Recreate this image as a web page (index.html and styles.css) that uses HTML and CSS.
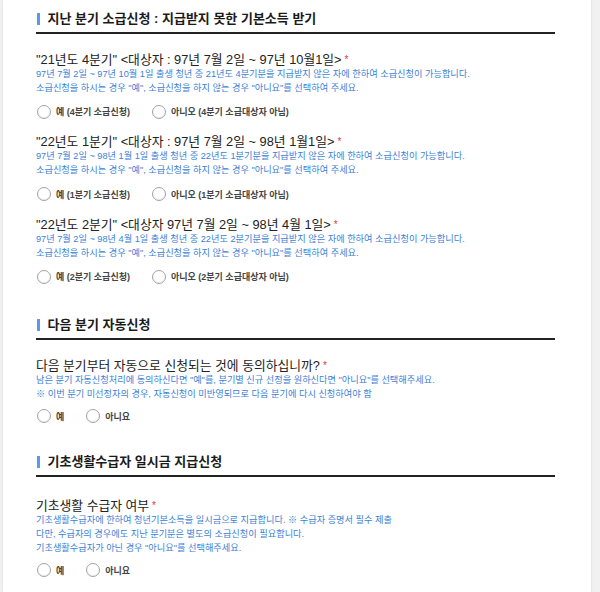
FILE: index.html
```html
<!DOCTYPE html>
<html lang="ko">
<head>
<meta charset="utf-8">
<title>소급신청</title>
<link rel="stylesheet" href="styles.css">
</head>
<body>
<div class="page">
  <section class="sec sec-first">
    <h2 class="sec-title">지난 분기 소급신청 : 지급받지 못한 기본소득 받기</h2>

    <div class="q q-first">
      <div class="q-title">"21년도 4분기" &lt;대상자 : 97년 7월 2일 ~ 97년 10월1일&gt;<span class="req">*</span></div>
      <div class="q-desc">97년 7월 2일 ~ 97년 10월 1일 출생 청년 중 21년도 4분기분을 지급받지 않은 자에 한하여 소급신청이 가능합니다.<br>소급신청을 하시는 경우 "예", 소급신청을 하지 않는 경우 "아니요"를 선택하여 주세요.</div>
      <div class="opts">
        <label class="opt"><span class="radio"></span>예 (4분기 소급신청)</label>
        <label class="opt"><span class="radio"></span>아니오 (4분기 소급대상자 아님)</label>
      </div>
    </div>

    <div class="q">
      <div class="q-title">"22년도 1분기" &lt;대상자 : 97년 7월 2일 ~ 98년 1월1일&gt;<span class="req">*</span></div>
      <div class="q-desc">97년 7월 2일 ~ 98년 1월 1일 출생 청년 중 22년도 1분기분을 지급받지 않은 자에 한하여 소급신청이 가능합니다.<br>소급신청을 하시는 경우 "예", 소급신청을 하지 않는 경우 "아니요"를 선택하여 주세요.</div>
      <div class="opts">
        <label class="opt"><span class="radio"></span>예 (1분기 소급신청)</label>
        <label class="opt"><span class="radio"></span>아니오 (1분기 소급대상자 아님)</label>
      </div>
    </div>

    <div class="q">
      <div class="q-title">"22년도 2분기" &lt;대상자 97년 7월 2일 ~ 98년 4월 1일&gt;<span class="req">*</span></div>
      <div class="q-desc">97년 7월 2일 ~ 98년 4월 1일 출생 청년 중 22년도 2분기분을 지급받지 않은 자에 한하여 소급신청이 가능합니다.<br>소급신청을 하시는 경우 "예", 소급신청을 하지 않는 경우 "아니요"를 선택하여 주세요.</div>
      <div class="opts">
        <label class="opt"><span class="radio"></span>예 (2분기 소급신청)</label>
        <label class="opt"><span class="radio"></span>아니오 (2분기 소급대상자 아님)</label>
      </div>
    </div>
  </section>

  <section class="sec sec-auto">
    <h2 class="sec-title">다음 분기 자동신청</h2>
    <div class="q q-first">
      <div class="q-title">다음 분기부터 자동으로 신청되는 것에 동의하십니까?<span class="req">*</span></div>
      <div class="q-desc">남은 분기 자동신청처리에 동의하신다면 "예"를, 분기별 신규 선정을 원하신다면 "아니요"를 선택해주세요.<br>※ 이번 분기 미선정자의 경우, 자동신청이 미반영되므로 다음 분기에 다시 신청하여야 함</div>
      <div class="opts">
        <label class="opt"><span class="radio"></span>예</label>
        <label class="opt"><span class="radio"></span>아니요</label>
      </div>
    </div>
  </section>

  <section class="sec sec-basic">
    <h2 class="sec-title">기초생활수급자 일시금 지급신청</h2>
    <div class="q q-first">
      <div class="q-title">기초생활 수급자 여부<span class="req">*</span></div>
      <div class="q-desc">기초생활수급자에 한하여 청년기본소득을 일시금으로 지급합니다. ※ 수급자 증명서 필수 제출<br>다만, 수급자의 경우에도 지난 분기분은 별도의 소급신청이 필요합니다.<br>기초생활수급자가 아닌 경우 "아니요"를 선택해주세요.</div>
      <div class="opts">
        <label class="opt"><span class="radio"></span>예</label>
        <label class="opt"><span class="radio"></span>아니요</label>
      </div>
    </div>
  </section>
</div>
</body>
</html>
```
FILE: styles.css
```css
html, body {
  margin: 0;
  padding: 0;
}
body {
  background: #f1f1f1;
  font-family: "Liberation Sans", "Noto Sans CJK KR", sans-serif;
  color: #222;
}
.page {
  margin-left: 3px;
  width: 588px;
  min-height: 592px;
  background: #fff;
  box-shadow: 0 0 2px rgba(0, 0, 0, 0.12);
  padding: 10px 0 0 33px;
  box-sizing: border-box;
}
.sec {
  width: 519px;
}
.sec-auto {
  margin-top: 31px;
}
.sec-basic {
  margin-top: 29px;
}
.sec-title {
  margin: 0;
  display: flex;
  align-items: center;
  font-size: 13px;
  line-height: 18px;
  font-weight: 700;
  color: #1a1a1a;
  padding-bottom: 4px;
  border-bottom: 2px solid #222;
}
.sec-title::before {
  content: "";
  width: 2.5px;
  height: 12px;
  background: #5b9be6;
  margin-left: 1px;
  margin-right: 8px;
}
.q {
  margin-top: 14.5px;
}
.sec-first .q-first {
  margin-top: 17.5px;
}
.sec-auto .q-first {
  margin-top: 18.5px;
}
.sec-basic .q-first {
  margin-top: 21px;
}
.q-title {
  font-size: 12.8px;
  line-height: 15px;
  color: #222;
}
.req {
  color: #e0393e;
  font-size: 10px;
  line-height: 10px;
  vertical-align: 1px;
  margin-left: 3px;
}
.q-desc {
  font-size: 9.2px;
  line-height: 14px;
  color: #3b7fd6;
}
.opts {
  margin-top: 9px;
  display: flex;
  align-items: center;
  gap: 21px;
  height: 16px;
}
.sec-auto .opts,
.sec-basic .opts {
  margin-top: 7px;
}
.opt {
  display: flex;
  align-items: center;
  font-size: 9px;
  font-weight: 700;
  color: #444;
}
.radio {
  width: 14px;
  height: 14px;
  box-sizing: border-box;
  border: 1px solid #a3a3a3;
  border-radius: 50%;
  background: #fff;
  box-shadow: inset 0 -1px 1px rgba(0, 0, 0, 0.07);
  margin-left: 1px;
  margin-right: 5px;
}
```
